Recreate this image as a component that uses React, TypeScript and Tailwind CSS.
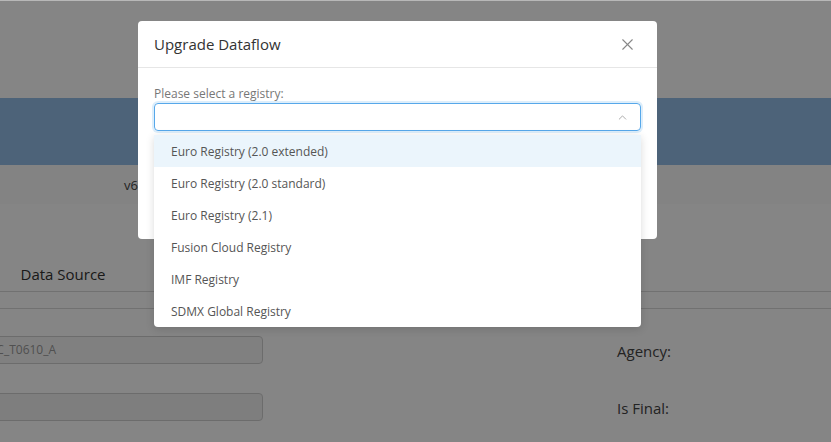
import { X, ChevronUp } from 'lucide-react'

export default function App() {
  const registries = [
    'Euro Registry (2.0 extended)',
    'Euro Registry (2.0 standard)',
    'Euro Registry (2.1)',
    'Fusion Cloud Registry',
    'IMF Registry',
    'SDMX Global Registry',
  ]

  return (
    <div className="relative h-[442px] w-full overflow-hidden bg-white font-['Open_Sans',sans-serif]">
      {/* page behind the dialog */}
      <div className="flex flex-col">
        <div className="h-[98px] bg-white" />
        <div className="h-[67px] bg-[#94bee8]" />
        <div className="flex h-[39px] items-center bg-[#fbfbfb] pl-[124px] pt-[2px] text-[13px] text-[#444]">v6.4.0</div>
        <div className="flex h-[88px] items-end">
          <div className="w-full border-b border-[#d8d8d8]">
            <div className="w-[126px] pb-[6px] text-center text-[15px] text-[#333]">Data Source</div>
          </div>
        </div>
        <div className="h-[17px] border-b border-[#d8d8d8]" />
        <div className="flex flex-col gap-[29px] pt-[27px]">
          <div className="flex items-center">
            <div className="ml-[-40px] flex h-[28px] w-[303px] items-center rounded-[4px] border border-[#d0d0d0] bg-[#f6f6f6] pl-[32px] text-[12px] text-[#999]">IC_T0610_A</div>
            <div className="ml-[354px] pt-[2px] text-[15px] text-[#444]">Agency:</div>
          </div>
          <div className="flex items-center">
            <div className="ml-[-40px] h-[28px] w-[303px] rounded-[4px] border border-[#d0d0d0] bg-[#f2f2f2]" />
            <div className="ml-[354px] pt-[2px] text-[15px] text-[#444]">Is Final:</div>
          </div>
        </div>
      </div>

      {/* mask */}
      <div className="absolute inset-0 bg-black/[0.48]" />
      <div className="absolute inset-x-0 top-0 h-px bg-[#b8b8b8]" />

      {/* dialog */}
      <div className="absolute left-[138px] top-[21px] h-[218px] w-[519px] rounded-[4px] bg-white">
        <div className="flex h-[47px] items-center justify-between border-b border-[#e6e6e6] pl-[16px] pr-[20px]">
          <span className="text-[15px] font-medium text-[#333]">Upgrade Dataflow</span>
          <X size={19} strokeWidth={1.4} className="text-[#888]" />
        </div>
        <div className="px-[16px] pt-[19px]">
          <div className="mb-[2px] text-[12px] leading-[14px] text-[#777]">Please select a registry:</div>
          <div className="flex h-[28px] items-center justify-end rounded-[4px] border border-[#57a8ea] pr-[11px] shadow-[0_0_0_2px_rgba(87,168,234,0.2)]">
            <ChevronUp size={13} strokeWidth={1.5} className="text-[#999]" />
          </div>
        </div>
      </div>

      {/* dropdown */}
      <div className="absolute left-[154px] top-[135px] w-[487px] rounded-b-[4px] bg-white shadow-[0_2px_8px_rgba(0,0,0,0.15)]">
        {registries.map((r, i) => (
          <div key={r} className={`flex h-[32px] items-center pl-[17px] pt-[2px] text-[12px] text-[#555] ${i === 0 ? 'bg-[#ebf5fc]' : ''}`}>
            {r}
          </div>
        ))}
      </div>
    </div>
  )
}
